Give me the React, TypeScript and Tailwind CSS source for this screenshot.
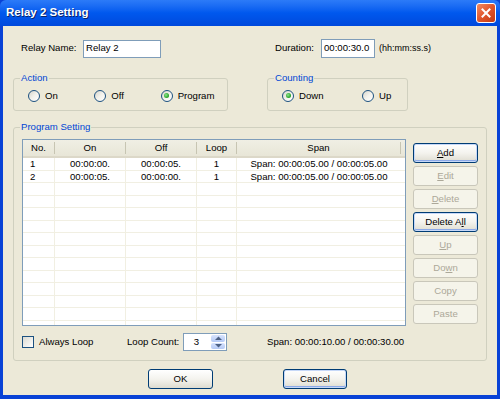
import React from 'react';

// ------------------------------------------------------------------ data --

const ROWS = [
  { no: '1', on: '00:00:00.', off: '00:00:05.', loop: '1', span: 'Span: 00:00:05.00 / 00:00:05.00' },
  { no: '2', on: '00:00:05.', off: '00:00:00.', loop: '1', span: 'Span: 00:00:05.00 / 00:00:05.00' },
];

const EMPTY_ROWS = 13;

// ------------------------------------------------------------- controls --

function Radio({ checked }: { checked?: boolean }) {
  return (
    <span className="flex h-[12px] w-[12px] shrink-0 items-center justify-center rounded-full border border-[#1C5180] bg-gradient-to-br from-[#D6D5CC] via-[#F3F2EC] to-white">
      {checked && <span className="h-[5px] w-[5px] rounded-full bg-[radial-gradient(circle_at_40%_40%,#8EE38E,#21A121_70%)]" />}
    </span>
  );
}

function RadioOption({ label, checked, width }: { label: string; checked?: boolean; width: string }) {
  return (
    <label className={`flex items-center gap-[5px] ${width}`}>
      <Radio checked={checked} />
      <span>{label}</span>
    </label>
  );
}

function GroupBox({ title, className, children }: { title: string; className: string; children: React.ReactNode }) {
  return (
    <div className={`relative rounded-[3px] border border-[#D0D0BF] ${className}`}>
      <span className="absolute left-[6px] top-[-7px] bg-[#ECE9D8] px-[1px] leading-[12px] text-[#0046D5]">{title}</span>
      {children}
    </div>
  );
}

type BtnProps = {
  label: React.ReactNode;
  disabled?: boolean;
  focus?: boolean;
  className?: string;
};

function XpButton({ label, disabled, focus, className = 'w-[65px]' }: BtnProps) {
  if (disabled) {
    return (
      <div className={`flex h-[20px] items-center justify-center rounded-[3px] border border-[#C9C7BA] bg-[#F5F4EA] text-[#ACA899] ${className}`}>
        {label}
      </div>
    );
  }
  return (
    <div
      className={`flex h-[20px] items-center justify-center rounded-[3px] border border-[#003C74] bg-gradient-to-b from-white via-[#F4F3EE] to-[#DEDCD0] text-black ${
        focus ? 'shadow-[inset_0_0_0_1px_#C6D8F8,inset_0_-1px_0_1px_#8CA9E8]' : ''
      } ${className}`}
    >
      {label}
    </div>
  );
}

function U({ children }: { children: React.ReactNode }) {
  return <span className="underline underline-offset-[1px]">{children}</span>;
}

// ---------------------------------------------------------------- list --

function ListView() {
  return (
    <div className="flex h-[187px] w-[384px] flex-col overflow-hidden border border-[#7F9DB9] bg-white">
      {/* header */}
      <div className="flex h-[18px] shrink-0 border-b-2 border-[#DCD8C8] bg-gradient-to-b from-[#F0EFE4] to-[#E8E6D7]">
        {[
          ['No.', 'w-[32px]'],
          ['On', 'w-[71px]'],
          ['Off', 'w-[71px]'],
          ['Loop', 'w-[40px]'],
          ['Span', 'w-[164px]'],
        ].map(([label, w]) => (
          <div key={label} className={`flex items-center ${w}`}>
            <span className="flex-1 text-center">{label}</span>
            <span className="h-[12px] w-px bg-[#C7C5B2]" />
          </div>
        ))}
      </div>

      {/* rows */}
      {[...ROWS, ...Array.from({ length: EMPTY_ROWS }, () => null)].map((r, i) => (
        <div key={i} className="flex h-[12.5px] shrink-0 border-b border-[#F1EFE2] leading-[12px]">
          <div className="w-[32px] border-r border-[#F1EFE2] pl-[7px]">{r?.no}</div>
          <div className="w-[71px] border-r border-[#F1EFE2] text-center">{r?.on}</div>
          <div className="w-[71px] border-r border-[#F1EFE2] text-center">{r?.off}</div>
          <div className="w-[40px] border-r border-[#F1EFE2] text-center">{r?.loop}</div>
          <div className="w-[164px] text-center">{r?.span}</div>
        </div>
      ))}
    </div>
  );
}

function Spinner() {
  return (
    <div className="flex h-[18px] w-[44px] items-stretch border border-[#7F9DB9] bg-white">
      <span className="flex flex-1 items-center justify-center pr-[2px]">3</span>
      <div className="my-[1px] mr-[1px] flex w-[14px] flex-col gap-[1px]">
        <span className="flex flex-1 items-center justify-center rounded-[2px] bg-gradient-to-b from-[#D7E3FD] to-[#B4C9F5]">
          <svg width="7" height="4" viewBox="0 0 7 4"><path d="M0 4 L3.5 0.5 L7 4 Z" fill="#4D6185" /></svg>
        </span>
        <span className="flex flex-1 items-center justify-center rounded-[2px] bg-gradient-to-b from-[#D7E3FD] to-[#B4C9F5]">
          <svg width="7" height="4" viewBox="0 0 7 4"><path d="M0 0 L3.5 3.5 L7 0 Z" fill="#4D6185" /></svg>
        </span>
      </div>
    </div>
  );
}

// ------------------------------------------------------------ component --

export default function App() {
  return (
    <div className="flex h-[399px] w-[500px] flex-col bg-[#0842D6] font-['Liberation_Sans',Arial,sans-serif] text-[9.6px] text-black">
      {/* Title bar */}
      <div className="flex h-[26px] shrink-0 items-center justify-between rounded-t-[6px] bg-gradient-to-b from-[#2C7BF8] via-[#0058EE] to-[#0049DC] pl-[6px] pr-[4px]">
        <span className="text-[11.5px] font-bold text-white [text-shadow:1px_1px_0_#0A246A]">Relay 2 Setting</span>
        <div className="flex h-[20px] w-[20px] items-center justify-center rounded-[3px] border border-white bg-gradient-to-br from-[#F08A63] via-[#E0552B] to-[#C13A12]">
          <svg width="10" height="10" viewBox="0 0 10 10">
            <path d="M1.5 1.5 L8.5 8.5 M8.5 1.5 L1.5 8.5" stroke="white" strokeWidth="2" strokeLinecap="square" />
          </svg>
        </div>
      </div>

      {/* Body */}
      <div className="flex flex-1 px-[3px] pb-[4px]">
        <div className="flex flex-1 flex-col bg-[#ECE9D8] pl-[10px] pt-[13px]">
          {/* Name / duration */}
          <div className="flex h-[19px] items-center">
            <span className="ml-[8px] w-[62px]">Relay Name:</span>
            <div className="flex h-[18px] w-[78px] items-center border border-[#7F9DB9] bg-white pl-[2px]">Relay 2</div>
            <span className="ml-[114px] w-[46px]">Duration:</span>
            <div className="flex h-[19px] w-[54px] items-center border border-[#7F9DB9] bg-white pl-[2px]">00:00:30.0</div>
            <span className="ml-[4px] text-[9px]">(hh:mm:ss.s)</span>
          </div>

          {/* Action / Counting */}
          <div className="mt-[20px] flex">
            <GroupBox title="Action" className="flex h-[33px] w-[215px] items-center pl-[14px] pt-[3px]">
              <RadioOption label="On" width="w-[68px]" />
              <RadioOption label="Off" width="w-[68px]" />
              <RadioOption label="Program" checked width="w-[68px]" />
            </GroupBox>
            <GroupBox title="Counting" className="ml-[39px] flex h-[33px] w-[141px] items-center pl-[14px] pt-[3px]">
              <RadioOption label="Down" checked width="w-[80px]" />
              <RadioOption label="Up" width="w-[40px]" />
            </GroupBox>
          </div>

          {/* Program Setting */}
          <GroupBox title="Program Setting" className="mt-[16px] h-[234px] w-[474px] pl-[8px] pt-[11px]">
            <div className="flex">
              <ListView />
              <div className="ml-[7px] mt-[4px] flex flex-col gap-[3px]">
                <XpButton focus label={<><U>A</U>dd</>} />
                <XpButton disabled label={<><U>E</U>dit</>} />
                <XpButton disabled label={<><U>D</U>elete</>} />
                <XpButton focus label={<>Delete A<U>l</U>l</>} />
                <XpButton disabled label={<><U>U</U>p</>} />
                <XpButton disabled label={<>Do<U>w</U>n</>} />
                <XpButton disabled label="Copy" />
                <XpButton disabled label="Paste" />
              </div>
            </div>

            <div className="mt-[7px] flex h-[18px] items-center">
              <div className="flex w-[105px] items-center">
                <span className="h-[12px] w-[12px] border border-[#1C5180] bg-gradient-to-br from-[#DCDBD2] to-white" />
                <span className="ml-[5px]">Always Loop</span>
              </div>
              <span className="w-[56px]">Loop Count:</span>
              <Spinner />
              <span className="ml-[40px]">Span: 00:00:10.00 / 00:00:30.00</span>
            </div>
          </GroupBox>

          {/* OK / Cancel */}
          <div className="mt-[8px] flex">
            <XpButton label="OK" className="ml-[135px] w-[65px]" />
            <XpButton focus label="Cancel" className="ml-[70px] w-[64px]" />
          </div>
        </div>
      </div>
    </div>
  );
}
